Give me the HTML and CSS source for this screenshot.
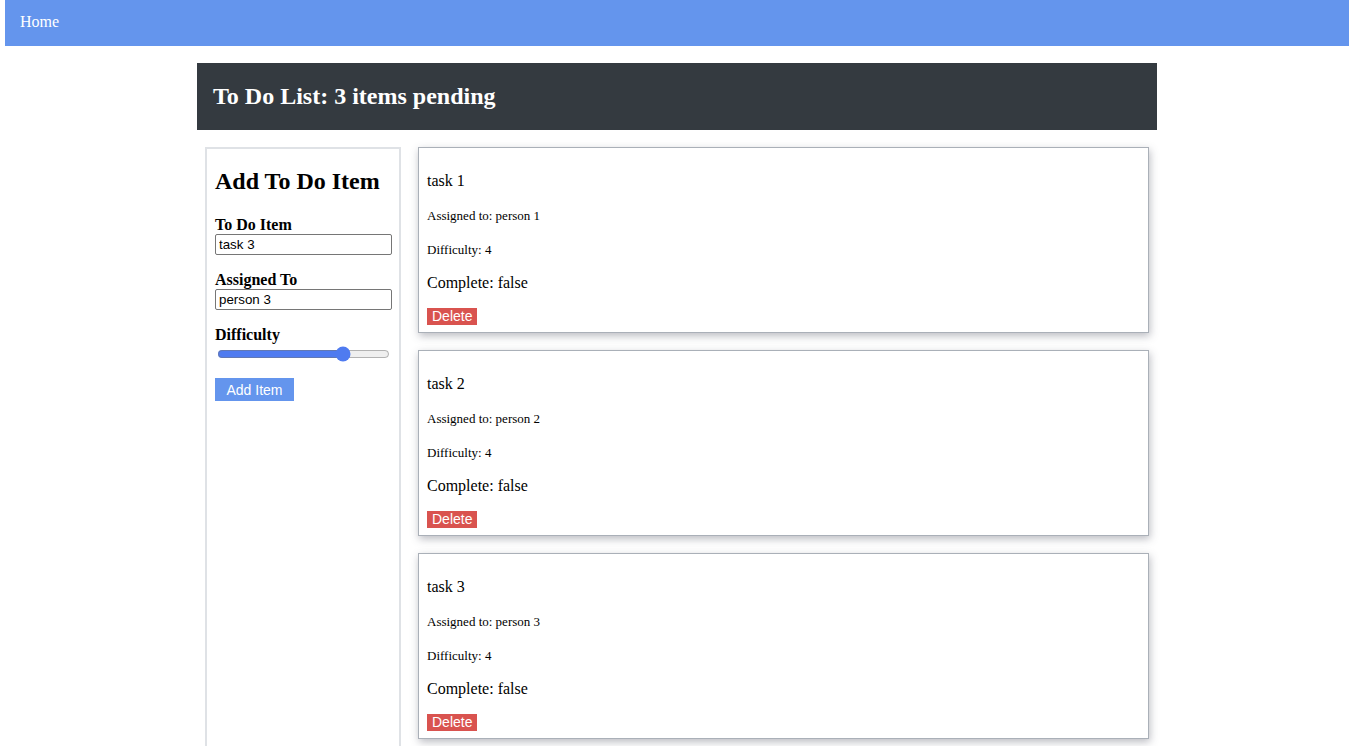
FILE: index.html
```html
<!DOCTYPE html>
<html>
<head>
<meta charset="utf-8">
<title>To Do List</title>
<link rel="stylesheet" href="styles.css">
</head>
<body>
<nav class="navbar"><span class="nav-link">Home</span></nav>
<main class="container">
  <header class="title-bar"><h1>To Do List: 3 items pending</h1></header>
  <div class="content">
    <form class="add-form">
      <h2>Add To Do Item</h2>
      <label class="field">
        <span class="label-text">To Do Item</span>
        <input type="text" value="task 3">
      </label>
      <label class="field">
        <span class="label-text">Assigned To</span>
        <input type="text" value="person 3">
      </label>
      <label class="field">
        <span class="label-text">Difficulty</span>
        <input type="range" min="1" max="5" value="4" class="slider">
      </label>
      <button type="button" class="add-btn">Add Item</button>
    </form>
    <section class="list">
      <div class="card">
        <p>task 1</p>
        <p><small>Assigned to: person 1</small></p>
        <p><small>Difficulty: 4</small></p>
        <p>Complete: false</p>
        <button type="button" class="delete-btn">Delete</button>
      </div>
      <div class="card">
        <p>task 2</p>
        <p><small>Assigned to: person 2</small></p>
        <p><small>Difficulty: 4</small></p>
        <p>Complete: false</p>
        <button type="button" class="delete-btn">Delete</button>
      </div>
      <div class="card">
        <p>task 3</p>
        <p><small>Assigned to: person 3</small></p>
        <p><small>Difficulty: 4</small></p>
        <p>Complete: false</p>
        <button type="button" class="delete-btn">Delete</button>
      </div>
    </section>
  </div>
</main>
</body>
</html>
```

FILE: styles.css
```css
html, body {
  margin: 0;
  padding: 0;
  background: #fff;
  font-family: "Liberation Serif", "Times New Roman", serif;
  color: #000;
}
.navbar {
  margin: 0 8px 0 5px;
  height: 46px;
  background: #6495ed;
  display: flex;
  align-items: center;
  padding-left: 15px;
}
.nav-link {
  color: #fff;
  font-size: 16px;
  margin-top: -3px;
}
.container {
  width: 960px;
  margin: 17px 0 0 197px;
}
.title-bar {
  background: #343a40;
  height: 67px;
  display: flex;
  align-items: center;
  padding-left: 16px;
}
.title-bar h1 {
  margin: 0;
  color: #fff;
  font-size: 24px;
  font-weight: bold;
}
.content {
  display: flex;
  gap: 17px;
  padding: 17px 8px 0;
  align-items: stretch;
}
.add-form {
  width: 196px;
  flex: none;
  box-sizing: border-box;
  border: 2px solid #dfe2e6;
  padding: 16px 8px 8px;
}
.add-form h2 {
  margin: 3px 0 21px;
  font-size: 24px;
  font-weight: bold;
}
.field {
  display: block;
  margin-bottom: 16px;
}
.label-text {
  display: block;
  font-weight: bold;
  font-size: 16px;
  line-height: 18px;
}
.field input[type="text"] {
  display: block;
  box-sizing: border-box;
  width: 177px;
  height: 21px;
  margin: 0;
  padding: 1px 3px;
  border: 1px solid #767676;
  border-radius: 2px;
  font-family: "Liberation Sans", Arial, sans-serif;
  font-size: 13.333px;
}
.slider {
  display: block;
  width: 173px;
  margin: 2px 2px 0;
  accent-color: #4f7bf0;
}
.add-btn {
  margin-top: 0;
  width: 79px;
  height: 23px;
  border: none;
  background: #6495ed;
  color: #fff;
  font-family: "Liberation Sans", Arial, sans-serif;
  font-size: 14px;
  padding: 0;
}
.list {
  flex: 1;
  display: flex;
  flex-direction: column;
  gap: 17px;
  padding-bottom: 40px;
}
.card {
  border: 1px solid #aab0b8;
  box-shadow: 1px 3px 8px rgba(60, 64, 80, 0.35);
  padding: 8px 8px 7px;
  background: #fff;
}
.card p {
  margin: 16px 0;
  font-size: 16px;
  line-height: 18px;
}
.card p small {
  font-size: 13px;
  line-height: 1;
}
.delete-btn {
  display: block;
  border: none;
  background: #d9534f;
  color: #fff;
  font-family: "Liberation Sans", Arial, sans-serif;
  font-size: 14px;
  line-height: 17px;
  height: 17px;
  padding: 0 5px;
}
```
